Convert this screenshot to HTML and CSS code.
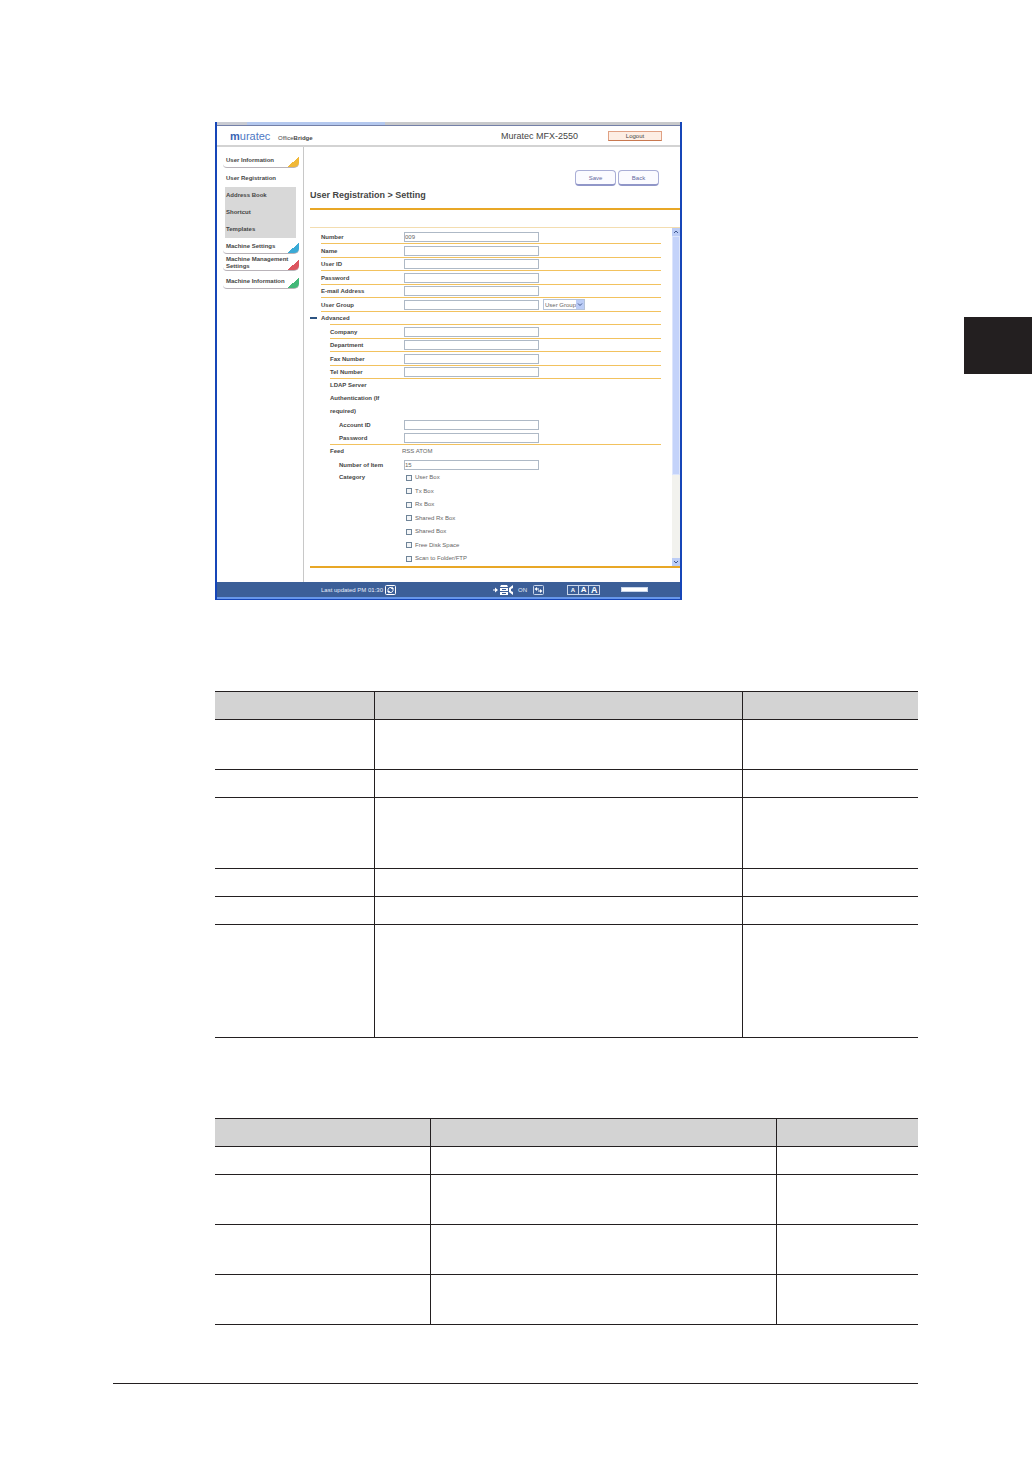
FILE: index.html
```
<!DOCTYPE html>
<html lang="en">
<head>
  <meta charset="utf-8">
  <title>User Registration</title>
  <link rel="stylesheet" href="styles.css">
</head>
<body>
  <div class="page">
    <main class="content">
      <div class="window">
        <div class="titlebar"></div>
        <header class="header">
          <div class="logo"><b>m</b>uratec</div>
          <div class="product">Office<b>Bridge</b></div>
          <div class="model">Muratec MFX-2550</div>
          <button class="logout" type="button">Logout</button>
        </header>

        <div class="panes">
          <nav class="sidebar">
            <a class="card yellow" href="#">User Information</a>
            <a class="current" href="#">User Registration</a>
            <div class="submenu">
              <a href="#">Address Book</a>
              <a href="#">Shortcut</a>
              <a href="#">Templates</a>
            </div>
            <a class="card blue" href="#">Machine Settings</a>
            <a class="card red" href="#">Machine Management Settings</a>
            <a class="card green" href="#">Machine Information</a>
          </nav>

          <section class="main">
            <div class="actions">
              <button type="button">Save</button>
              <button type="button">Back</button>
            </div>
            <h1>User Registration &gt; Setting</h1>

            <div class="scroll-area">
              <form class="form">
                <div class="rows">
                  <div class="row"><label for="number">Number</label><input type="text" id="number" value="009"></div>
                  <div class="row"><label for="name">Name</label><input type="text" id="name"></div>
                  <div class="row"><label for="userId">User ID</label><input type="text" id="userId"></div>
                  <div class="row"><label for="password">Password</label><input type="password" id="password"></div>
                  <div class="row"><label for="email">E-mail Address</label><input type="text" id="email"></div>
                  <div class="row">
                    <label for="userGroup">User Group</label><input type="text" id="userGroup">
                    <span class="select">
                      <select aria-label="User Group"><option>User Group</option></select>
                      <svg viewBox="0 0 8 9"><path d="M2 3.500l2 2 2-2" /></svg>
                    </span>
                  </div>
                </div>

                <div class="advanced"><button class="toggle" type="button" aria-label="Collapse"></button>Advanced</div>

                <div class="rows sub">
                  <div class="row"><label for="company">Company</label><input type="text" id="company"></div>
                  <div class="row"><label for="department">Department</label><input type="text" id="department"></div>
                  <div class="row"><label for="fax">Fax Number</label><input type="text" id="fax"></div>
                  <div class="row"><label for="tel">Tel Number</label><input type="text" id="tel"></div>
                </div>

                <div class="group">
                  <div class="group-title">LDAP Server<br>Authentication (If<br>required)</div>
                  <div class="field"><label for="account">Account ID</label><input type="text" id="account"></div>
                  <div class="field"><label for="ldapPassword">Password</label><input type="password" id="ldapPassword"></div>
                </div>

                <div class="group last">
                  <div class="feed"><span class="group-title">Feed</span><span><a href="#">RSS</a> <a href="#">ATOM</a></span></div>
                  <div class="field"><label for="items">Number of Item</label><input type="text" id="items" value="15"></div>
                  <div class="field category">
                    <div class="name">Category</div>
                    <div class="checks">
                      <label><input type="checkbox">User Box</label>
                      <label><input type="checkbox">Tx Box</label>
                      <label><input type="checkbox">Rx Box</label>
                      <label><input type="checkbox">Shared Rx Box</label>
                      <label><input type="checkbox">Shared Box</label>
                      <label><input type="checkbox">Free Disk Space</label>
                      <label><input type="checkbox">Scan to Folder/FTP</label>
                    </div>
                  </div>
                </div>
              </form>
              <div class="scrollbar">
                <svg viewBox="0 0 8 8"><path d="M2 5l2-2 2 2" /></svg>
                <div class="thumb"></div>
                <div class="track"></div>
                <svg viewBox="0 0 8 8"><path d="M2 3l2 2 2-2" /></svg>
              </div>
            </div>
          </section>
        </div>

        <footer class="footer">
          <span>Last updated PM 01:30</span>
          <button class="icon refresh" type="button" aria-label="Refresh">
            <svg viewBox="0 0 11 10"><rect x=".5" y=".5" width="10" height="9" rx="1" /><path d="M3 6V4.500A2.500 2.500 0 0 1 7.500 3.500M8 4v1.500A2.500 2.500 0 0 1 3.500 6.500" /><path class="fill" d="M7 1.500l2 2.500H6zM4 8.500L2 6h3z" /></svg>
          </button>
          <svg class="device" viewBox="0 0 21 10"><path d="M0 5h4" /><path class="fill" d="M2 2.500L5 5 2 7.500zM8 0h6l1 2H7zM7 3h8v3H7zM7 7h8v3H7zM20 0v3l-2 1v2l2 1v3l-4-3V3z" /><path class="cut" d="M9 4.500h4M9 8.500h4" /></svg>
          <span>ON</span>
          <button class="icon switch" type="button" aria-label="Switch">
            <svg viewBox="0 0 11 10"><rect class="frame" x=".5" y=".5" width="10" height="9" rx="1" /><path d="M3 4h3M5 6h3" /><path class="fill" d="M4 2v4L1.500 4zM7 4v4l2.500-2z" /></svg>
          </button>
          <div class="sizes">
            <button class="small" type="button">A</button>
            <button class="medium" type="button">A</button>
            <button class="large" type="button">A</button>
          </div>
          <div class="memory"></div>
        </footer>
      </div>

      <table class="basic">
        <colgroup><col class="item"><col class="desc"><col></colgroup>
        <thead>
          <tr><th></th><th></th><th></th></tr>
        </thead>
        <tbody>
          <tr class="two"><td></td><td></td><td></td></tr>
          <tr><td></td><td></td><td></td></tr>
          <tr class="three"><td></td><td></td><td></td></tr>
          <tr><td></td><td></td><td></td></tr>
          <tr><td></td><td></td><td></td></tr>
          <tr class="five"><td></td><td></td><td></td></tr>
        </tbody>
      </table>

      <table class="details">
        <colgroup><col class="item"><col class="desc"><col></colgroup>
        <thead>
          <tr><th></th><th></th><th></th></tr>
        </thead>
        <tbody>
          <tr><td></td><td></td><td></td></tr>
          <tr class="two"><td></td><td></td><td></td></tr>
          <tr class="two"><td></td><td></td><td></td></tr>
          <tr class="two"><td></td><td></td><td></td></tr>
        </tbody>
      </table>

      <hr>
    </main>
    <aside class="chapter-tab"></aside>
  </div>
</body>
</html>
```
FILE: styles.css
```
:root {
  --ink: #231f20;
  --text: #454545;
  --text-light: #666;
  --orange: #e8a726;
  --row-line: #f2c25e;
  --field-border: #aeb9c6;
  --footer: #3c5f98;
}

* {
  box-sizing: border-box;
}

body {
  margin: 0;
  background: #fff;
  color: var(--text);
  font-family: "Liberation Sans", Arial, sans-serif;
  font-size: 6px;
  line-height: 8px;
}

a {
  color: inherit;
  text-decoration: none;
}

button,
input,
select {
  margin: 0;
  padding: 0;
  font: inherit;
  color: inherit;
}

.page {
  display: grid;
  grid-template-columns: minmax(0, 1fr) 68px;
}

.content {
  padding: 122px 46px 72px 113px;
}

.chapter-tab {
  height: 57px;
  margin-top: 317px;
  background: var(--ink);
}

/* browser window */
.window {
  max-width: 467px;
  margin-left: 102px;
  border: solid #1646b8;
  border-width: 0 2px 1px;
}

.titlebar {
  height: 4px;
  background: linear-gradient(to right, #c9cbd2 30px, #b4c8ee 30px, #b4c8ee 168px, #c8c9cb 168px);
  border-bottom: 1px solid #7480a8;
}

.header {
  display: flex;
  align-items: center;
  height: 21px;
  padding: 0 18px 0 13px;
  border-bottom: 2px solid #d3d3d3;
}

.logo {
  width: 48px;
  font-size: 11px;
  line-height: 12px;
  color: #4d78c4;
}

.logo b {
  color: #3a64b4;
}

.product {
  padding-top: 4px;
}

.model {
  margin-left: auto;
  font-size: 9px;
  line-height: 12px;
}

.logout {
  width: 54px;
  height: 10px;
  margin-left: 30px;
  background: #fdeee4;
  border: 1px solid #e0a184;
  border-bottom-color: #c87850;
  line-height: 8px;
}

.panes {
  display: flex;
}

/* left menu */
.sidebar {
  flex: none;
  width: 87px;
  padding: 7px 4px 0 6px;
  border-right: 1px solid #c8c8c8;
  font-weight: bold;
}

.sidebar a {
  display: block;
  padding-left: 3px;
  line-height: 17px;
}

.sidebar .card {
  display: flex;
  align-items: center;
  min-height: 14px;
  margin-bottom: 2px;
  border-bottom: 1px solid #b9b3b9;
  border-radius: 0 0 5px 4px;
  background: linear-gradient(to bottom right, transparent 50%, var(--corner) 50%) right bottom / 12px 10px no-repeat;
  line-height: 7px;
}

.sidebar .yellow {
  --corner: #f0b838;
}

.sidebar .blue {
  --corner: #3aaad6;
}

.sidebar .red {
  --corner: #dc5660;
}

.sidebar .green {
  --corner: #43b878;
  margin-top: 4px;
}

.submenu {
  margin: 0 3px 2px 2px;
  background: #d8d8d8;
}

.submenu a {
  padding-left: 1px;
}

/* setting pane */
.main {
  flex: 1;
  min-width: 0;
  padding: 23px 0 14px 6px;
}

.actions {
  display: flex;
  justify-content: flex-end;
  gap: 2px;
  padding-right: 21px;
}

.actions button {
  width: 41px;
  height: 16px;
  background: #fbfbff;
  border: 1px solid #a9aed6;
  border-bottom: 2px solid #9096c8;
  border-radius: 4px;
  color: #6468a0;
}

h1 {
  margin: 3px 0 17px;
  padding-bottom: 7px;
  border-bottom: 2px solid var(--orange);
  font-size: 9px;
  line-height: 12px;
}

.scroll-area {
  display: flex;
  border-top: 1px solid #f3ddb0;
  border-bottom: 2px solid var(--orange);
}

.form {
  flex: 1;
  padding: 3px 11px 1px 0;
}

.rows {
  margin-left: 11px;
}

.row {
  display: flex;
  align-items: center;
  height: 13px;
  border-bottom: 1px solid var(--row-line);
}

.row:nth-child(even) {
  height: 14px;
}

.row label,
.field label,
.field .name,
.group-title,
.advanced {
  font-weight: bold;
}

.row > label {
  width: 83px;
}

.form input[type="text"],
.form input[type="password"] {
  width: 135px;
  height: 10px;
  border: 1px solid var(--field-border);
  background: #fff;
  color: var(--text-light);
}

.select {
  position: relative;
  margin-left: 4px;
}

.select select {
  display: block;
  width: 42px;
  height: 11px;
  padding-left: 1px;
  appearance: none;
  border: 1px solid #b5c3d8;
  border-radius: 0;
  background: #fff;
  color: var(--text-light);
}

.select svg {
  position: absolute;
  top: 1px;
  right: 1px;
  width: 8px;
  height: 9px;
  pointer-events: none;
}

.select svg,
.scrollbar svg {
  background: #bccdf6;
  fill: none;
  stroke: #40588f;
}

.advanced {
  display: flex;
  align-items: center;
  height: 12px;
}

.toggle {
  width: 7px;
  height: 2px;
  margin-right: 4px;
  border: 0;
  background: #2d5482;
}

.sub {
  margin-left: 20px;
  border-top: 1px solid var(--row-line);
}

.sub .row {
  height: 14px;
}

.sub .row:nth-child(even) {
  height: 13px;
}

.sub .row > label {
  width: 74px;
}

.group {
  margin-left: 20px;
  border-bottom: 1px solid var(--row-line);
}

.group.last {
  border: 0;
}

.group-title {
  line-height: 13px;
}

.field {
  display: flex;
  align-items: center;
  height: 13px;
  padding-left: 9px;
}

.field > label,
.category .name {
  width: 65px;
}

.feed {
  display: flex;
  line-height: 13px;
}

.feed .group-title {
  width: 72px;
}

.feed a {
  color: var(--text-light);
}

.category {
  align-items: flex-start;
  height: auto;
  line-height: 13px;
}

.checks label {
  display: flex;
  align-items: center;
  height: 13px;
  color: var(--text-light);
  font-weight: normal;
}

.checks label:nth-child(even) {
  height: 14px;
}

.checks input {
  width: 6px;
  height: 6px;
  margin: 0 3px 0 2px;
  appearance: none;
  border: 1px solid #6f8498;
  background: #f3f5f7;
}

.checks input:checked {
  background: #40588f;
}

.scrollbar {
  display: flex;
  flex-direction: column;
  width: 8px;
  background: #f2f2ee;
}

.scrollbar svg {
  width: 8px;
  height: 8px;
}

.thumb {
  flex: 240;
  background: #c4d3fa;
  border: 1px solid #dce5fc;
}

.track {
  flex: 84;
}

/* status bar */
.footer {
  display: flex;
  align-items: center;
  height: 17px;
  padding-left: 104px;
  background: var(--footer);
  border-bottom: 2px solid #6797ea;
  color: #e6edf8;
}

.footer svg {
  display: block;
  width: 11px;
  height: 10px;
  fill: none;
  stroke: #fff;
}

.footer svg .fill {
  fill: #fff;
  stroke: none;
}

.footer svg .cut {
  stroke: var(--footer);
}

.footer .frame {
  stroke: #c9d6ea;
}

.footer .device {
  width: 21px;
  margin: 0 4px 0 97px;
}

.icon {
  border: 0;
  background: none;
}

.refresh {
  margin-left: 2px;
}

.switch {
  margin-left: 6px;
}

.sizes {
  display: flex;
  width: 33px;
  height: 10px;
  margin-left: 23px;
  border: 1px solid #c9d6ea;
}

.sizes button {
  flex: 1;
  border: 0;
  background: none;
  color: #fff;
  font-weight: bold;
  line-height: 8px;
}

.sizes button + button {
  border-left: 1px solid #c9d6ea;
}

.sizes .medium {
  font-size: 8px;
}

.sizes .large {
  font-size: 9px;
}

.memory {
  width: 27px;
  height: 5px;
  margin-left: 21px;
  border: 1px solid #c9d6ea;
  background: #fff;
}

/* description tables */
table {
  width: calc(100% - 102px);
  margin-left: 102px;
  table-layout: fixed;
  border-collapse: collapse;
}

tr {
  height: 28px;
}

tr.two {
  height: 50px;
}

tr.three {
  height: 71px;
}

tr.five {
  height: 113px;
}

th,
td {
  padding: 0;
  border: solid var(--ink);
  border-width: 1px 0;
}

th + th,
td + td {
  border-left-width: 1px;
}

th {
  background: #d3d3d3;
}

.basic {
  margin-top: 91px;
}

.basic .item {
  width: 159px;
}

.basic .desc {
  width: 368px;
}

.details {
  margin-top: 80px;
}

.details .item {
  width: 215px;
}

.details .desc {
  width: 346px;
}

hr {
  margin: 58px 0 0;
  border: 0;
  border-top: 1px solid var(--ink);
}
```
